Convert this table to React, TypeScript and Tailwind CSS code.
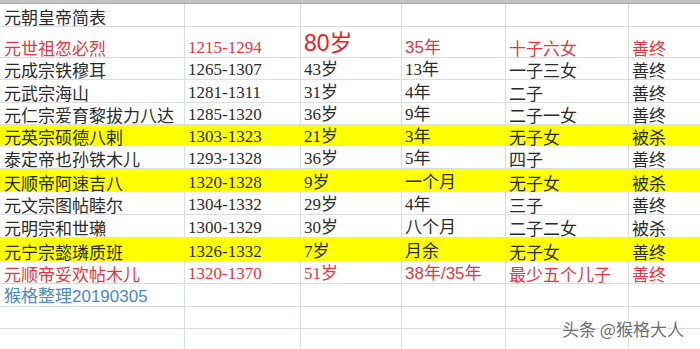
import React from "react";

type Row = {
  cells: string[];
  h: number;
  tone?: "red" | "yellow" | "blue";
};

const rows: Row[] = [
  { cells: ["元朝皇帝简表", "", "", "", "", ""], h: 23 },
  { cells: ["元世祖忽必烈", "1215-1294", "80岁", "35年", "十子六女", "善终"], h: 31, tone: "red" },
  { cells: ["元成宗铁穆耳", "1265-1307", "43岁", "13年", "一子三女", "善终"], h: 22 },
  { cells: ["元武宗海山", "1281-1311", "31岁", "4年", "二子", "善终"], h: 23 },
  { cells: ["元仁宗爱育黎拔力八达", "1285-1320", "36岁", "9年", "二子一女", "善终"], h: 22 },
  { cells: ["元英宗硕德八剌", "1303-1323", "21岁", "3年", "无子女", "被杀"], h: 21, tone: "yellow" },
  { cells: ["泰定帝也孙铁木儿", "1293-1328", "36岁", "5年", "四子", "善终"], h: 23 },
  { cells: ["天顺帝阿速吉八", "1320-1328", "9岁", "一个月", "无子女", "被杀"], h: 23, tone: "yellow" },
  { cells: ["元文宗图帖睦尔", "1304-1332", "29岁", "4年", "三子", "善终"], h: 23 },
  { cells: ["元明宗和世瓎", "1300-1329", "30岁", "八个月", "二子二女", "被杀"], h: 23 },
  { cells: ["元宁宗懿璘质班", "1326-1332", "7岁", "月余", "无子女", "善终"], h: 23, tone: "yellow" },
  { cells: ["元顺帝妥欢帖木儿", "1320-1370", "51岁", "38年/35年", "最少五个儿子", "善终"], h: 23, tone: "red" },
  { cells: ["猴格整理20190305", "", "", "", "", ""], h: 23, tone: "blue" },
  { cells: ["", "", "", "", "", ""], h: 22 },
  { cells: ["", "", "", "", "", ""], h: 23 },
];

const cjk = "font-['Noto_Sans_CJK_SC','Noto_Sans',sans-serif]";
const serifNum = "font-['Liberation_Serif','Noto_Sans_CJK_SC',serif]";
const sansNum = "font-['Liberation_Sans','Noto_Sans_CJK_SC',sans-serif]";

function cellFont(row: Row, i: number) {
  if (i === 0 || i === 4 || i === 5) return cjk;
  if (row.tone === "red" && i === 3) return sansNum;
  if (row.tone === "blue") return sansNum;
  return serifNum;
}

export default function App() {
  return (
    <div className="relative w-[700px] h-[349px] overflow-hidden bg-white">
      <div className="h-[4px] bg-[#c4c4c4] border-b border-[#a9a9a9]" />
      {rows.map((row, r) => {
        const yellow = row.tone === "yellow";
        const color =
          row.tone === "red" ? "text-[#e8363c]" : row.tone === "blue" ? "text-[#4a88c7]" : "text-[#2b2b2b]";
        return (
          <div
            key={r}
            className={`grid grid-cols-[185px_116px_101px_104px_123px_1fr] ${
              yellow ? "bg-[#ffff00]" : "border-b border-[#d9dde4]"
            }`}
            style={{ height: row.h }}
          >
            {row.cells.map((c, i) => {
              const big = row.tone === "red" && i === 2 && r === 1;
              return (
                <div
                  key={i}
                  className={`flex items-end overflow-visible whitespace-nowrap pl-[3px] pb-[1px] ${
                    yellow || i === 5 ? "" : "border-r border-[#d9dde4]"
                  } ${i === 0 ? "pl-[4px]" : ""}`}
                >
                  {big ? (
                    <span className={`${sansNum} text-[23px] leading-none text-[#ee1c25] mb-[1px]`}>{c}</span>
                  ) : (
                    <span className={`${i === 0 && row.tone === "blue" ? sansNum : cellFont(row, i)} text-[17px] leading-none ${color}`}>
                      {c}
                    </span>
                  )}
                </div>
              );
            })}
          </div>
        );
      })}
      <div className="absolute left-[562px] top-[320px] font-['Noto_Sans_CJK_SC',sans-serif] text-[17px] leading-none text-[#6e6e6e] [text-shadow:1px_1px_0_#ffffff,-1px_-1px_0_#ffffff]">
        头条 @猴格大人
      </div>
    </div>
  );
}
